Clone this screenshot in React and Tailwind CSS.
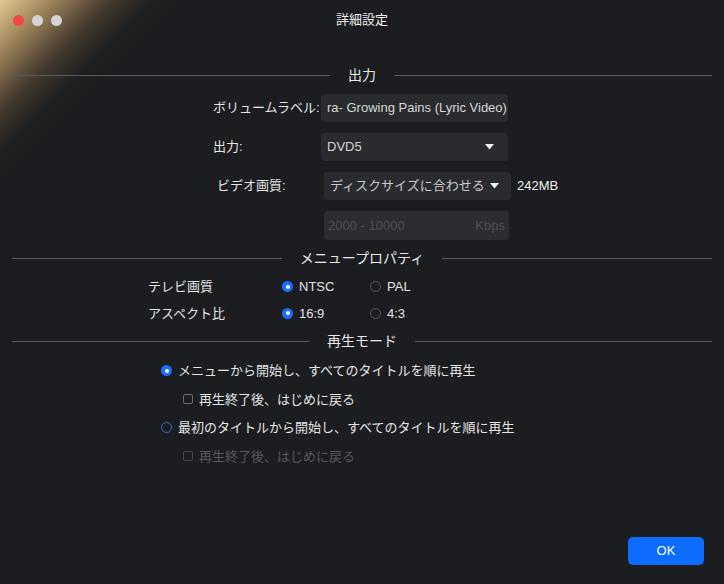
import React, { useState } from "react";

const font = { fontFamily: '"Liberation Sans", "Noto Sans CJK JP", sans-serif' };

const Divider = ({ title }) => (
  <div className="flex items-center gap-[18px] px-3">
    <div className="h-px flex-1 bg-[#5a5b5e]" />
    <span className="text-[14px] text-[#e6e6e6]">{title}</span>
    <div className="h-px flex-1 bg-[#5a5b5e]" />
  </div>
);

const Radio = ({ on, blue }) =>
  on ? (
    <span className="flex h-[11px] w-[11px] items-center justify-center rounded-full bg-[#1a6dff]">
      <span className="h-[4px] w-[4px] rounded-full bg-white" />
    </span>
  ) : (
    <span
      className={
        "h-[11px] w-[11px] rounded-full border " +
        (blue ? "border-[#2b6fe0]" : "border-[#55575b]")
      }
    />
  );

const Caret = () => (
  <svg width="9" height="6" viewBox="0 0 9 6">
    <path d="M0 0h9L4.5 5.5z" fill="#f2f2f2" />
  </svg>
);

export default function App() {
  const [tv, setTv] = useState("ntsc");
  const [aspect, setAspect] = useState("169");
  const [mode, setMode] = useState(0);

  return (
    <div
      className="relative h-[584px] w-[724px] overflow-hidden bg-[#1c1d20] text-[13px] text-[#e4e4e4]"
      style={font}
    >
      {/* corner glare */}
      <div className="pointer-events-none absolute left-0 top-0 h-[200px] w-[200px] bg-[linear-gradient(135deg,rgba(238,210,155,0.95)_0%,rgba(195,160,105,0.75)_14%,rgba(125,100,68,0.4)_28%,rgba(60,52,42,0.15)_38%,rgba(28,29,32,0)_46%)]" />

      <div className="relative flex h-[40px] items-center">
        <div className="flex gap-[8px] pl-[13px]">
          <span className="h-[11px] w-[11px] rounded-full bg-[#f0484a]" />
          <span className="h-[11px] w-[11px] rounded-full bg-[#d3d4d7]" />
          <span className="h-[11px] w-[11px] rounded-full bg-[#d3d4d7]" />
        </div>
        <div className="absolute inset-x-0 text-center text-[13px] text-[#ececec]">詳細設定</div>
      </div>

      <div className="relative pt-[25px]">
        <Divider title="出力" />

        <div className="mt-[8px] flex flex-col gap-[11px] pl-[213px]">
          <div className="flex items-center">
            <span className="w-[108px]">ボリュームラベル:</span>
            <div className="flex h-[28px] w-[187px] items-center rounded-[4px] bg-[#2a2b2e] pl-[6px] text-[#d6d6d6]">
              ra- Growing Pains (Lyric Video)
            </div>
          </div>
          <div className="flex items-center">
            <span className="w-[108px]">出力:</span>
            <div className="flex h-[28px] w-[187px] items-center justify-between rounded-[4px] bg-[#2a2b2e] pl-[6px] pr-[14px] text-[#d6d6d6]">
              DVD5
              <Caret />
            </div>
          </div>
          <div className="flex items-center">
            <span className="w-[111px] pl-[4px]">ビデオ画質:</span>
            <div className="flex h-[28px] w-[187px] items-center justify-between rounded-[4px] bg-[#2a2b2e] pl-[6px] pr-[12px] text-[#c9c9c9]">
              ディスクサイズに合わせる
              <Caret />
            </div>
            <span className="ml-[6px] text-[#f0f0f0]">242MB</span>
          </div>
          <div className="flex items-center pl-[111px]">
            <div className="flex h-[29px] w-[185px] items-center justify-between rounded-[4px] bg-[#2c2d30] px-[4px] text-[#4e5054]">
              <span>2000 - 10000</span>
              <span>Kbps</span>
            </div>
          </div>
        </div>

        <div className="mt-[8px]">
          <Divider title="メニュープロパティ" />
        </div>

        <div className="mt-[8px] flex flex-col gap-[7px] pl-[148px]">
          <div className="flex items-center">
            <span className="w-[134px]">テレビ画質</span>
            <button className="flex w-[88px] items-center gap-[6px]" onClick={() => setTv("ntsc")}>
              <Radio on={tv === "ntsc"} />
              NTSC
            </button>
            <button className="flex items-center gap-[6px]" onClick={() => setTv("pal")}>
              <Radio on={tv === "pal"} />
              PAL
            </button>
          </div>
          <div className="flex items-center">
            <span className="w-[134px]">アスペクト比</span>
            <button className="flex w-[88px] items-center gap-[6px]" onClick={() => setAspect("169")}>
              <Radio on={aspect === "169"} />
              16:9
            </button>
            <button className="flex items-center gap-[6px]" onClick={() => setAspect("43")}>
              <Radio on={aspect === "43"} />
              4:3
            </button>
          </div>
        </div>

        <div className="mt-[8px]">
          <Divider title="再生モード" />
        </div>

        <div className="mt-[9px] flex flex-col gap-[9px] pl-[161px]">
          <button className="flex items-center gap-[6px]" onClick={() => setMode(0)}>
            <Radio on={mode === 0} blue />
            メニューから開始し、すべてのタイトルを順に再生
          </button>
          <div className={"flex items-center gap-[6px] pl-[22px] " + (mode === 0 ? "" : "text-[#56585c]")}>
            <span className={"h-[10px] w-[10px] rounded-[2px] border " + (mode === 0 ? "border-[#6a6c70]" : "border-[#45474b]")} />
            再生終了後、はじめに戻る
          </div>
          <button className="flex items-center gap-[6px]" onClick={() => setMode(1)}>
            <Radio on={mode === 1} blue />
            最初のタイトルから開始し、すべてのタイトルを順に再生
          </button>
          <div className={"flex items-center gap-[6px] pl-[22px] " + (mode === 1 ? "" : "text-[#56585c]")}>
            <span className={"h-[10px] w-[10px] rounded-[2px] border " + (mode === 1 ? "border-[#6a6c70]" : "border-[#45474b]")} />
            再生終了後、はじめに戻る
          </div>
        </div>
      </div>

      <div className="absolute bottom-[19px] right-[20px]">
        <button className="h-[28px] w-[76px] rounded-[5px] bg-[#0b6cff] text-[13px] text-white">OK</button>
      </div>
    </div>
  );
}
